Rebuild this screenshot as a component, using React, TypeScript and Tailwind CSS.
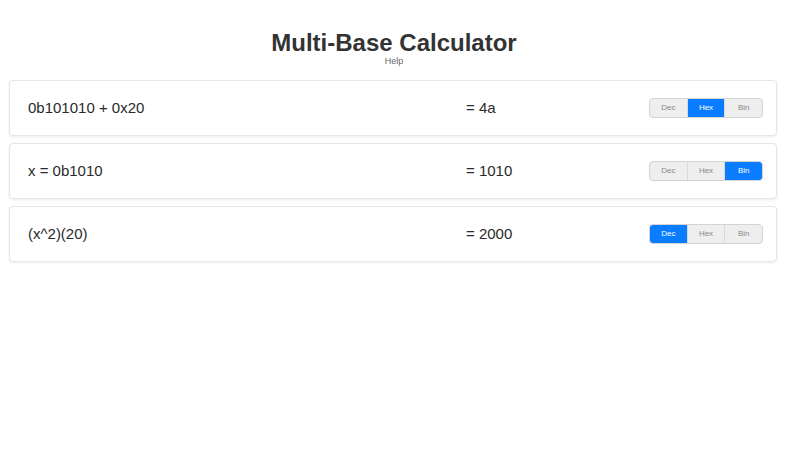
const rows = [
    { expr: "0b101010 + 0x20", result: "= 4a", base: "Hex" },
    { expr: "x = 0b1010", result: "= 1010", base: "Bin" },
    { expr: "(x^2)(20)", result: "= 2000", base: "Dec" },
];

function BaseToggle({ active }: { active: string }) {
    return (
        <div className="flex h-[20px] w-[114px] rounded-[4px] border border-[#d4d4d4] bg-[#eeeeee] overflow-hidden">
            {["Dec", "Hex", "Bin"].map((b, i) => (
                <div
                    key={b}
                    className={
                        "flex-1 flex items-center justify-center text-[8px] font-normal " +
                        (i > 0 ? "border-l border-[#d9d9d9] " : "") +
                        (b === active ? "bg-[#0a7cff] text-white" : "text-[#888]")
                    }
                >
                    {b}
                </div>
            ))}
        </div>
    );
}

export default function App() {
    return (
        <div className="w-full min-h-[465px] bg-white font-['Liberation_Sans',Arial,sans-serif] text-[#222]">
            <div className="pt-[29px] flex flex-col items-center">
                <h1 className="text-[24px] leading-[27px] font-bold text-[#333]">Multi-Base Calculator</h1>
                <div className="text-[9px] leading-[10px] text-[#666]">Help</div>
            </div>
            <div className="pl-[9px] pr-[11px] pt-[14px] flex flex-col gap-[7px]">
                {rows.map((r) => (
                    <div
                        key={r.expr}
                        className="h-[56px] flex items-center rounded-[4px] border border-[#e6e6e6] bg-white shadow-[0_1px_3px_rgba(0,0,0,0.08)] pl-[18px] pr-[13px]"
                    >
                        <div className="flex-1 text-[15px] text-[#2a2a2a]">{r.expr}</div>
                        <div className="w-[183px] text-[15px] text-[#2a2a2a]">{r.result}</div>
                        <BaseToggle active={r.base} />
                    </div>
                ))}
            </div>
        </div>
    );
}
